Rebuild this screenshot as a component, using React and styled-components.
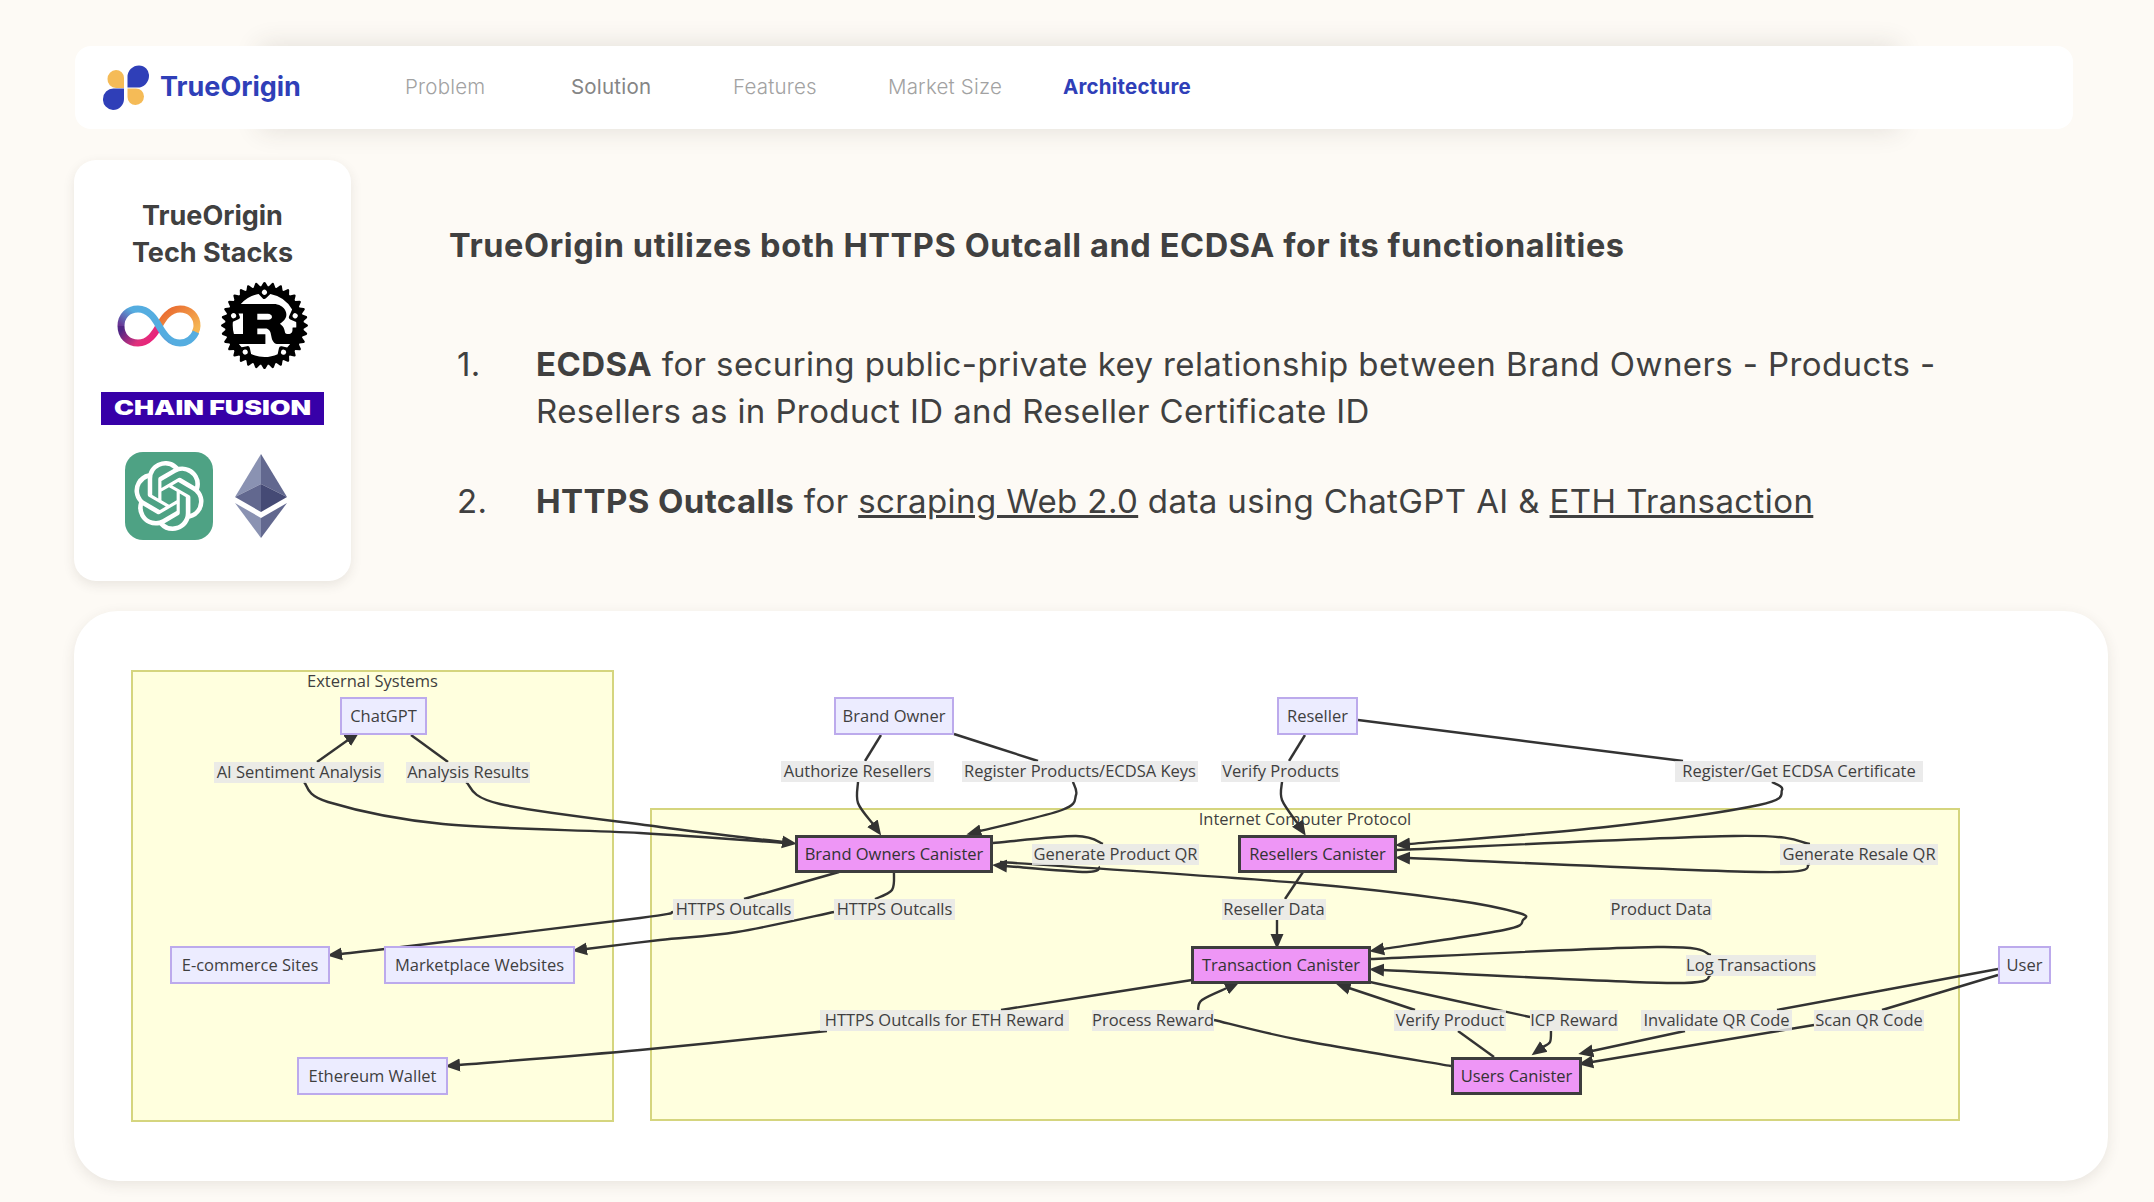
import React from 'react';
import styled, { createGlobalStyle } from 'styled-components';
import { SiOpenai, SiRust } from 'react-icons/si';

const GlobalStyle = createGlobalStyle`
  html {
    background: #fdfaf5;
  }
  body {
    margin: 0;
    padding: 0;
  }
`;

const Page = styled.div`
  width: 2154px;
  height: 1202px;
  box-sizing: border-box;
  padding: 46px 46px 0 74px;
  overflow: hidden;
  font-family: Inter, Lato, sans-serif;
  color: #404040;
`;

const Nav = styled.nav`
  position: relative;
  width: 1998px;
  height: 83px;
  margin-left: 1px;
  display: flex;
  align-items: center;
  padding-left: 28px;
  box-sizing: border-box;
  background: #fff;
  border-radius: 16px;

  &::before {
    content: '';
    position: absolute;
    z-index: -1;
    left: 190px;
    right: 180px;
    top: 4px;
    bottom: 4px;
    box-shadow: 0 0 24px 6px rgba(60, 50, 40, 0.12);
  }
`;

const Brand = styled.div`
  display: flex;
  align-items: center;
  gap: 11px;
  width: 302px;
  font-size: 27px;
  font-weight: 700;
  color: #2f3fb8;

  span {
    margin-top: -2px;
  }
`;

const NavLink = styled.a`
  font-size: 20.5px;
  letter-spacing: 0.2px;
  width: ${(p) => p.$w}px;
  margin-top: -2px;
  white-space: nowrap;
  color: ${(p) => (p.$active ? '#2f3fb8' : p.$strong ? '#858585' : '#a2a2a2')};
  font-weight: ${(p) => (p.$active ? 700 : p.$strong ? 400 : 300)};
`;

const Row = styled.div`
  display: flex;
  margin-top: 31px;
`;

const SideCard = styled.aside`
  width: 277px;
  height: 421px;
  box-sizing: border-box;
  padding-top: 37px;
  flex-shrink: 0;
  background: #fff;
  border-radius: 22px;
  box-shadow: 0 4px 12px rgba(60, 50, 40, 0.1);
  display: flex;
  flex-direction: column;
  align-items: center;
`;

const SideTitle = styled.h3`
  margin: 0;
  font-size: 27px;
  line-height: 37px;
  font-weight: 700;
  text-align: center;
  color: #404040;
`;

const LogoRow = styled.div`
  display: flex;
  align-items: center;
  gap: ${(p) => p.$gap}px;
  margin-top: ${(p) => p.$top}px;
  padding-right: ${(p) => p.$right || 0}px;
`;

const ChainFusion = styled.div`
  width: 223px;
  height: 33px;
  background: #3700a8;
  color: #fff;
  font-size: 20px;
  font-weight: 900;
  line-height: 33px;
  text-align: center;
  white-space: nowrap;

  span {
    display: inline-block;
    transform: scaleX(1.34);
  }
`;

const GptTile = styled.div`
  width: 88px;
  height: 88px;
  border-radius: 18px;
  background: #4ea284;
  color: #fff;
  display: flex;
  align-items: center;
  justify-content: center;
`;

const Main = styled.section`
  padding: 65px 0 0 98px;
`;

const Heading = styled.h1`
  margin: 0;
  font-size: 32.5px;
  line-height: 42px;
  font-weight: 700;
  letter-spacing: 0.6px;
  color: #404040;
`;

const Points = styled.ol`
  list-style: none;
  margin: 74px 0 0;
  padding: 0;
  width: 1510px;
`;

const Point = styled.li`
  display: flex;
  font-size: 33px;
  line-height: 47px;
  letter-spacing: 0.4px;
  margin-bottom: 43px;
`;

const Num = styled.span`
  width: 87px;
  padding-left: 8px;
  box-sizing: border-box;
  flex-shrink: 0;
`;

const DiagramCard = styled.section`
  position: relative;
  width: 2034px;
  height: 570px;
  margin-top: 30px;
  background: #fff;
  border-radius: 44px;
  box-shadow: 0 4px 14px rgba(60, 50, 40, 0.1);
  font-family: 'Open Sans', sans-serif;
  font-size: 16.5px;
  color: #3f3f3f;
`;

const OX = 74;
const OY = 611;

const Placed = styled.div`
  position: absolute;
  left: ${(p) => p.$x - OX}px;
  top: ${(p) => p.$y - OY}px;
  width: ${(p) => p.$w}px;
  height: ${(p) => p.$h}px;
  box-sizing: border-box;
  display: flex;
  align-items: center;
  justify-content: center;
  white-space: nowrap;
`;

const Cluster = styled(Placed)`
  background: #ffffde;
  border: 2px solid #d5d57e;
  align-items: flex-start;
  line-height: 18px;
`;

const Node = styled(Placed)`
  background: ${(p) => (p.$canister ? '#ee96f6' : '#ececff')};
  border: ${(p) => (p.$canister ? '3px solid #3d3d3d' : '2px solid #bcaaec')};
  color: ${(p) => (p.$canister ? '#333' : '#3f3f3f')};
  padding-bottom: 2px;
`;

const EdgeLabel = styled(Placed)`
  background: rgba(232, 232, 232, 0.85);
  padding-bottom: 2px;
`;

const Edges = styled.svg`
  position: absolute;
  left: 0;
  top: 0;
  width: 2034px;
  height: 570px;
`;

const clusters = [
  { x: 131, y: 670, w: 483, h: 452, label: 'External Systems' },
  { x: 650, y: 808, w: 1310, h: 313, label: 'Internet Computer Protocol' },
];

const nodes = [
  { x: 340, y: 697, w: 87, h: 38, label: 'ChatGPT' },
  { x: 170, y: 946, w: 160, h: 38, label: 'E-commerce Sites' },
  { x: 384, y: 946, w: 191, h: 38, label: 'Marketplace Websites' },
  { x: 297, y: 1057, w: 151, h: 38, label: 'Ethereum Wallet' },
  { x: 834, y: 697, w: 120, h: 38, label: 'Brand Owner' },
  { x: 1277, y: 697, w: 81, h: 38, label: 'Reseller' },
  { x: 1998, y: 946, w: 53, h: 38, label: 'User' },
  { x: 795, y: 835, w: 198, h: 38, label: 'Brand Owners Canister', canister: true },
  { x: 1238, y: 835, w: 159, h: 38, label: 'Resellers Canister', canister: true },
  { x: 1191, y: 946, w: 180, h: 38, label: 'Transaction Canister', canister: true },
  { x: 1451, y: 1057, w: 131, h: 38, label: 'Users Canister', canister: true },
];

const labels = [
  { x: 214, y: 762, w: 170, label: 'AI Sentiment Analysis' },
  { x: 406, y: 762, w: 124, label: 'Analysis Results' },
  { x: 781, y: 761, w: 153, label: 'Authorize Resellers' },
  { x: 962, y: 761, w: 236, label: 'Register Products/ECDSA Keys' },
  { x: 1221, y: 761, w: 119, label: 'Verify Products' },
  { x: 1675, y: 761, w: 248, label: 'Register/Get ECDSA Certificate' },
  { x: 1032, y: 844, w: 167, label: 'Generate Product QR' },
  { x: 1780, y: 844, w: 158, label: 'Generate Resale QR' },
  { x: 673, y: 899, w: 121, label: 'HTTPS Outcalls' },
  { x: 834, y: 899, w: 121, label: 'HTTPS Outcalls' },
  { x: 1222, y: 899, w: 104, label: 'Reseller Data' },
  { x: 1610, y: 899, w: 102, label: 'Product Data' },
  { x: 1686, y: 955, w: 130, label: 'Log Transactions' },
  { x: 820, y: 1010, w: 249, label: 'HTTPS Outcalls for ETH Reward' },
  { x: 1092, y: 1010, w: 122, label: 'Process Reward' },
  { x: 1394, y: 1010, w: 112, label: 'Verify Product' },
  { x: 1530, y: 1010, w: 88, label: 'ICP Reward' },
  { x: 1641, y: 1010, w: 151, label: 'Invalidate QR Code' },
  { x: 1814, y: 1010, w: 110, label: 'Scan QR Code' },
];

// polyline points of each edge, read off the reference; arrow = ends in a head
const edges = [
  { pts: [[304, 782], [328, 802], [443, 824], [640, 833], [785, 843]], arrow: false },
  { pts: [[317, 762], [348, 740]], arrow: true },
  { pts: [[411, 735], [448, 762]] },
  { pts: [[466, 782], [500, 804], [660, 827], [783, 842]], arrow: true },
  { pts: [[839, 872], [744, 899]] },
  { pts: [[673, 912], [640, 918], [410, 946], [341, 954]], arrow: true },
  { pts: [[894, 872], [892, 890], [875, 899]] },
  { pts: [[834, 912], [737, 932], [660, 940], [586, 949]], arrow: true },
  { pts: [[1192, 980], [1001, 1010]] },
  { pts: [[827, 1031], [640, 1050], [459, 1065]], arrow: true },
  { pts: [[881, 735], [865, 761]] },
  { pts: [[858, 782], [858, 803], [873, 824]], arrow: true },
  { pts: [[954, 734], [1038, 761]] },
  { pts: [[1073, 782], [1076, 795], [1062, 810], [980, 831]], arrow: true },
  { pts: [[1305, 735], [1289, 761]] },
  { pts: [[1282, 782], [1282, 800], [1298, 824]], arrow: true },
  { pts: [[1358, 720], [1683, 761]] },
  { pts: [[1772, 782], [1782, 790], [1759, 805], [1606, 827], [1409, 844]], arrow: true },
  { pts: [[993, 843], [1076, 836], [1103, 844]] },
  { pts: [[1100, 867], [1086, 872], [1006, 866]], arrow: true },
  { pts: [[1000, 862], [1300, 883], [1453, 900], [1519, 913], [1523, 920], [1504, 930], [1383, 949]], arrow: true },
  { pts: [[1397, 850], [1734, 836], [1810, 844]] },
  { pts: [[1810, 864], [1759, 872], [1409, 858]], arrow: true },
  { pts: [[1370, 959], [1657, 947], [1711, 955]] },
  { pts: [[1711, 975], [1667, 983], [1383, 970]], arrow: true },
  { pts: [[1303, 872], [1285, 899]] },
  { pts: [[1277, 920], [1277, 935]], arrow: true },
  { pts: [[1451, 1066], [1300, 1040], [1214, 1020]] },
  { pts: [[1198, 1010], [1202, 1000], [1227, 988]], arrow: true },
  { pts: [[1494, 1057], [1458, 1031]] },
  { pts: [[1415, 1010], [1349, 988]], arrow: true },
  { pts: [[1370, 982], [1530, 1017]] },
  { pts: [[1551, 1031], [1550, 1042], [1543, 1047]], arrow: true },
  { pts: [[1998, 969], [1777, 1010]] },
  { pts: [[1685, 1031], [1592, 1051]], arrow: true },
  { pts: [[1998, 975], [1882, 1010]] },
  { pts: [[1814, 1025], [1592, 1062]], arrow: true },
];

// Catmull-Rom through the points, as cubic beziers
function toPath(pts) {
  let d = `M${pts[0][0]} ${pts[0][1]}`;
  for (let i = 0; i < pts.length - 1; i++) {
    const p0 = pts[i - 1] || pts[i];
    const p1 = pts[i];
    const p2 = pts[i + 1];
    const p3 = pts[i + 2] || p2;
    const c1 = [p1[0] + (p2[0] - p0[0]) / 6, p1[1] + (p2[1] - p0[1]) / 6];
    const c2 = [p2[0] - (p3[0] - p1[0]) / 6, p2[1] - (p3[1] - p1[1]) / 6];
    d += ` C${c1[0]} ${c1[1]} ${c2[0]} ${c2[1]} ${p2[0]} ${p2[1]}`;
  }
  return d;
}

function LogoMark() {
  return (
    <svg width="46" height="45" viewBox="0 0 46 45">
      <path d="M13 5a8 8 0 0 1 8 8v10h-8a8.500 8.500 0 0 1-8.500-9A9 9 0 0 1 13 5z" fill="#f5bb57" />
      <path d="M36 0.500A10 10 0 0 1 46 11a11.500 11.500 0 0 1-11.500 11.500H24.500V12A11.500 11.500 0 0 1 36 0.500z" fill="#2f3fb8" />
      <path d="M0 34a10.500 10.500 0 0 1 10.500-10.500H21V34a11 11 0 0 1-11 11A10.500 10.500 0 0 1 0 34z" fill="#2f3fb8" />
      <path d="M24.500 23.500H33a8 8 0 0 1 8 8 8.500 8.500 0 0 1-8.500 8.500 8 8 0 0 1-8-8z" fill="#f5bb57" />
    </svg>
  );
}

function IcpLogo() {
  return (
    <svg width="84" height="42" viewBox="0 0 84 42" fill="none" strokeWidth="7">
      <defs>
        <linearGradient id="icpLeft" x1="0" y1="0.3" x2="1" y2="0.7">
          <stop offset="0" stopColor="#522785" />
          <stop offset="0.6" stopColor="#e0317c" />
          <stop offset="1" stopColor="#ed1e79" />
        </linearGradient>
        <linearGradient id="icpRight" x1="0" y1="0" x2="1" y2="0.8">
          <stop offset="0" stopColor="#e8612c" />
          <stop offset="1" stopColor="#f5b553" />
        </linearGradient>
        <linearGradient id="icpBlue" gradientUnits="userSpaceOnUse" x1="3" y1="22" x2="16" y2="6">
          <stop offset="0" stopColor="#6a2c8e" />
          <stop offset="1" stopColor="#55ade0" />
        </linearGradient>
      </defs>
      <path d="M42 21C38 28 32 38 21 38C11 38 4 31 4 21" stroke="url(#icpLeft)" />
      <path d="M42 21C46 14 52 4 63 4C73 4 80 11 80 21C80 24 79 26 78 28" stroke="url(#icpRight)" />
      <path d="M4 21C4 11 11 4 21 4C32 4 38 14 42 21C46 28 52 38 63 38C71 38 76 33 79 27" stroke="url(#icpBlue)" />
    </svg>
  );
}

function EthLogo() {
  return (
    <svg width="52" height="84" viewBox="0 0 52 84">
      <polygon points="26,0 0,43 26,30" fill="#8a92b2" />
      <polygon points="26,0 52,43 26,30" fill="#62688f" />
      <polygon points="26,30 0,43 26,58" fill="#62688f" />
      <polygon points="26,30 52,43 26,58" fill="#454a75" />
      <polygon points="0,49 26,64 26,84" fill="#8a92b2" />
      <polygon points="52,49 26,64 26,84" fill="#62688f" />
    </svg>
  );
}

function TechStacks() {
  return (
    <SideCard>
      <SideTitle>
        TrueOrigin
        <br />
        Tech Stacks
      </SideTitle>
      <LogoRow $gap={20} $top={11}>
        <IcpLogo />
        <SiRust size={87} color="#000" />
      </LogoRow>
      <LogoRow $gap={0} $top={23}>
        <ChainFusion>
          <span>CHAIN FUSION</span>
        </ChainFusion>
      </LogoRow>
      <LogoRow $gap={22} $top={27} $right={14}>
        <GptTile>
          <SiOpenai size={70} />
        </GptTile>
        <EthLogo />
      </LogoRow>
    </SideCard>
  );
}

function Diagram() {
  return (
    <DiagramCard>
      {clusters.map((c) => (
        <Cluster key={c.label} $x={c.x} $y={c.y} $w={c.w} $h={c.h}>
          {c.label}
        </Cluster>
      ))}
      <Edges viewBox={`${OX} ${OY} 2034 570`}>
        <defs>
          <marker id="head" markerUnits="userSpaceOnUse" markerWidth="16" markerHeight="16" refX="1" refY="8" orient="auto">
            <path d="M0 1.500L15 8L0 14.500z" fill="#333" />
          </marker>
        </defs>
        {edges.map((e, i) => (
          <path
            key={i}
            d={toPath(e.pts)}
            fill="none"
            stroke="#333"
            strokeWidth="2.4"
            markerEnd={e.arrow ? 'url(#head)' : undefined}
          />
        ))}
      </Edges>
      {labels.map((l, i) => (
        <EdgeLabel key={i} $x={l.x} $y={l.y} $w={l.w} $h={21}>
          {l.label}
        </EdgeLabel>
      ))}
      {nodes.map((n) => (
        <Node key={n.label} $x={n.x} $y={n.y} $w={n.w} $h={n.h} $canister={n.canister}>
          {n.label}
        </Node>
      ))}
    </DiagramCard>
  );
}

export default function App() {
  return (
    <Page>
      <GlobalStyle />
      <Nav>
        <Brand>
          <LogoMark />
          <span>TrueOrigin</span>
        </Brand>
        <NavLink $w={166}>Problem</NavLink>
        <NavLink $w={162} $strong>Solution</NavLink>
        <NavLink $w={155}>Features</NavLink>
        <NavLink $w={175}>Market Size</NavLink>
        <NavLink $active>Architecture</NavLink>
      </Nav>
      <Row>
        <TechStacks />
        <Main>
          <Heading>TrueOrigin utilizes both HTTPS Outcall and ECDSA for its functionalities</Heading>
          <Points>
            <Point>
              <Num>1.</Num>
              <span>
                <b>ECDSA</b> for securing public-private key relationship between Brand Owners - Products - Resellers as in Product ID and Reseller Certificate ID
              </span>
            </Point>
            <Point>
              <Num>2.</Num>
              <span>
                <b>HTTPS Outcalls</b> for <u>scraping Web 2.0</u> data using ChatGPT AI &amp; <u>ETH Transaction</u>
              </span>
            </Point>
          </Points>
        </Main>
      </Row>
      <Diagram />
    </Page>
  );
}
